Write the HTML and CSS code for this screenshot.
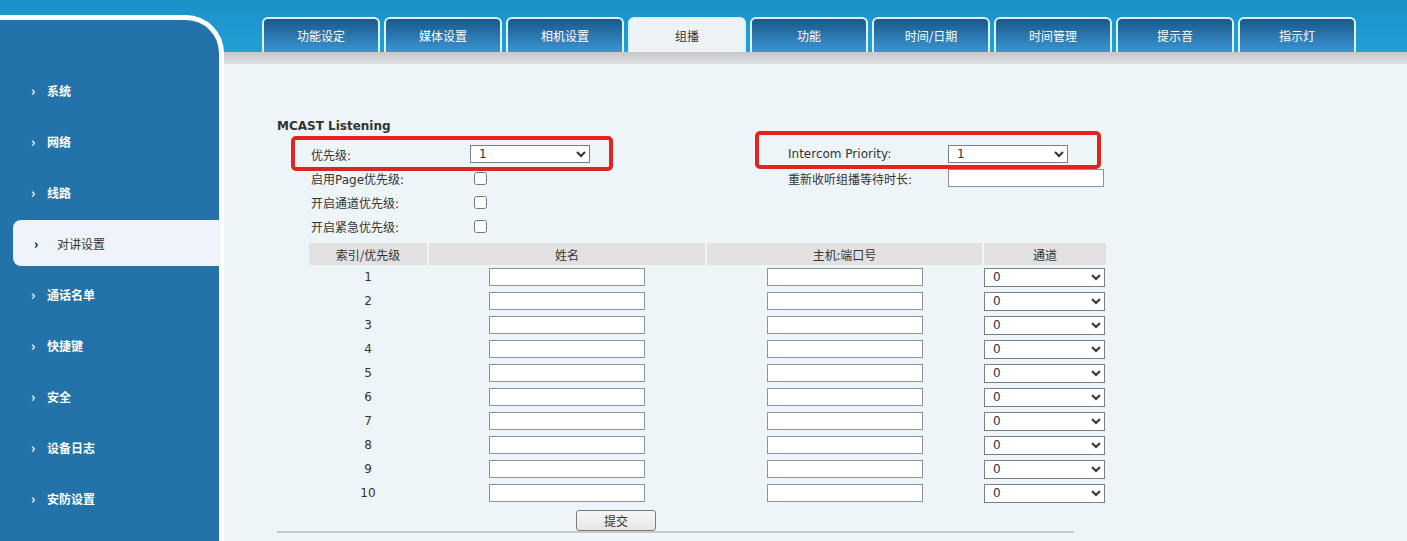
FILE: index.html
```html
<!DOCTYPE html>
<html lang="zh-CN">
<head>
    <meta charset="UTF-8">
    <title>组播</title>
    <link rel="stylesheet" href="styles.css">
</head>
<body>
<div class="page">
    <aside class="sidebar">
        <ul class="menu">
            <li><span class="arrow">›</span>系统</li>
            <li><span class="arrow">›</span>网络</li>
            <li><span class="arrow">›</span>线路</li>
            <li class="active"><span class="arrow">›</span>对讲设置</li>
            <li><span class="arrow">›</span>通话名单</li>
            <li><span class="arrow">›</span>快捷键</li>
            <li><span class="arrow">›</span>安全</li>
            <li><span class="arrow">›</span>设备日志</li>
            <li><span class="arrow">›</span>安防设置</li>
        </ul>
    </aside>

    <div class="main">
        <nav class="tabs">
            <a class="tab">功能设定</a>
            <a class="tab">媒体设置</a>
            <a class="tab">相机设置</a>
            <a class="tab active">组播</a>
            <a class="tab">功能</a>
            <a class="tab">时间/日期</a>
            <a class="tab">时间管理</a>
            <a class="tab">提示音</a>
            <a class="tab">指示灯</a>
        </nav>
        <div class="band"></div>

        <section class="content">
            <h3 class="title">MCAST Listening</h3>
            <div class="form">
                <label>优先级:</label>
                <select class="sel"><option>1</option></select>
                <label>Intercom Priority:</label>
                <select class="sel"><option>1</option></select>

                <label>启用Page优先级:</label>
                <input type="checkbox">
                <label>重新收听组播等待时长:</label>
                <input type="text" class="text">

                <label>开启通道优先级:</label>
                <input type="checkbox">
                <span></span><span></span>

                <label>开启紧急优先级:</label>
                <input type="checkbox">
                <span></span><span></span>

                <span class="mark mark-left"></span>
                <span class="mark mark-right"></span>
            </div>

            <table class="list">
                <thead>
                    <tr><th class="c-idx">索引/优先级</th><th class="c-name">姓名</th><th class="c-host">主机:端口号</th><th class="c-ch">通道</th></tr>
                </thead>
                <tbody id="rows"></tbody>
            </table>

            <div class="actions"><button type="button">提交</button></div>
            <div class="rule"></div>
        </section>
    </div>
</div>

<script>
    const rows = document.getElementById("rows");
    for (let i = 1; i <= 10; i++) {
        const tr = document.createElement("tr");
        tr.innerHTML =
            '<td>' + i + '</td>' +
            '<td><input type="text" class="text"></td>' +
            '<td><input type="text" class="text"></td>' +
            '<td class="ch"><select class="sel"><option>0</option></select></td>';
        rows.appendChild(tr);
    }
</script>
</body>
</html>
```

FILE: styles.css
```css
body {
    margin: 0;
    font-family: "DejaVu Sans", "Noto Sans CJK SC", sans-serif;
    font-size: 12px;
    color: #333;
}
.page {
    display: flex;
    height: 100vh;
    overflow: hidden;
    background: linear-gradient(to bottom, #1a91c8, #22a1d6) top / 100% 52px no-repeat, #eef5f8;
}
.sidebar {
    flex: 0 0 219px;
    margin-top: 15px;
    background: #2372a9;
    border-top: 5px solid #fff;
    border-right: 5px solid #fff;
    border-top-right-radius: 38px;
}
.menu {
    list-style: none;
    margin: 0;
    padding: 47px 0 0;
}
.menu li {
    display: flex;
    align-items: center;
    height: 46px;
    margin-bottom: 5px;
    padding-left: 31px;
    color: #fff;
    font-family: "Noto Sans CJK SC", sans-serif;
    font-weight: bold;
    font-size: 12px;
}
.menu .arrow {
    width: 16px;
    font-size: 13px;
}
.menu li.active {
    margin-left: 13px;
    margin-right: -2px;
    padding-left: 21px;
    background: #eef4f9;
    border-radius: 8px 0 0 8px;
    color: #333;
    font-weight: normal;
}
.menu li.active .arrow {
    width: 23px;
    color: #000;
    font-weight: bold;
}
.main {
    flex: 1;
    display: flex;
    flex-direction: column;
}
.tabs {
    display: flex;
    gap: 4px;
    height: 35px;
    padding: 17px 0 0 38px;
}
.tab {
    box-sizing: border-box;
    width: 118px;
    height: 35px;
    display: flex;
    align-items: center;
    justify-content: center;
    border: 2px solid #dcf2fa;
    border-bottom: none;
    border-radius: 6px 6px 0 0;
    background: linear-gradient(to bottom, #1b5889, #3a95d4);
    color: #fff;
    font-family: "Noto Sans CJK SC", sans-serif;
    font-size: 12px;
}
.tab.active {
    background: #eef3f6;
    color: #333;
}
.band {
    height: 12px;
    background: linear-gradient(to bottom, #c6c6cb, #dfe0e3);
}
.content {
    padding: 54px 0 0 53px;
}
.title {
    margin: 0 0 8px;
    font-size: 12px;
    line-height: 16px;
    font-weight: bold;
}
.form {
    position: relative;
    display: grid;
    grid-template-columns: 159px 318px 160px 160px;
    grid-auto-rows: 24px;
    align-items: center;
    margin-left: 34px;
}
.form input[type="checkbox"] {
    margin: 0 0 0 4px;
    width: 13px;
    height: 13px;
}
.sel {
    box-sizing: border-box;
    width: 120px;
    height: 18px;
    padding: 0 4px;
    border: 1px solid #7b7f84;
    border-radius: 0;
    background: #fff;
    font-family: "DejaVu Sans", sans-serif;
    font-size: 12px;
    color: #333;
}
.text {
    box-sizing: border-box;
    width: 156px;
    height: 18px;
    border: 1px solid #8c9196;
    background: #fff;
    vertical-align: middle;
}
.mark {
    position: absolute;
    border: 4px solid #e1241f;
    border-radius: 5px;
}
.mark-left {
    left: -20px;
    top: -6px;
    width: 314px;
    height: 27px;
}
.mark-right {
    left: 444px;
    top: -11px;
    width: 338px;
    height: 30px;
}
.list {
    margin: 5px 0 0 30px;
    border-spacing: 2px 0;
}
.list th {
    height: 22px;
    padding: 0;
    background: #e2e0e0;
    font-weight: normal;
    font-family: "Noto Sans CJK SC", sans-serif;
}
.c-idx { width: 118px; }
.c-name { width: 276px; }
.c-host { width: 275px; }
.c-ch { width: 122px; }
.list td {
    height: 24px;
    padding: 0;
    text-align: center;
}
.list td.ch {
    text-align: left;
}
.list td.ch .sel {
    width: 121px;
    height: 19px;
    vertical-align: middle;
}
.actions {
    height: 21px;
    margin-top: 5px;
    padding-left: 299px;
}
.actions button {
    width: 80px;
    height: 21px;
    padding: 0;
    border: 1px solid #7c7c7c;
    border-radius: 3px;
    background: linear-gradient(to bottom, #f6f6f6, #e6e6e6);
    font-family: "Noto Sans CJK SC", sans-serif;
    font-size: 12px;
    color: #333;
}
.rule {
    width: 797px;
    height: 2px;
    background: #c9c9c9;
}
```
